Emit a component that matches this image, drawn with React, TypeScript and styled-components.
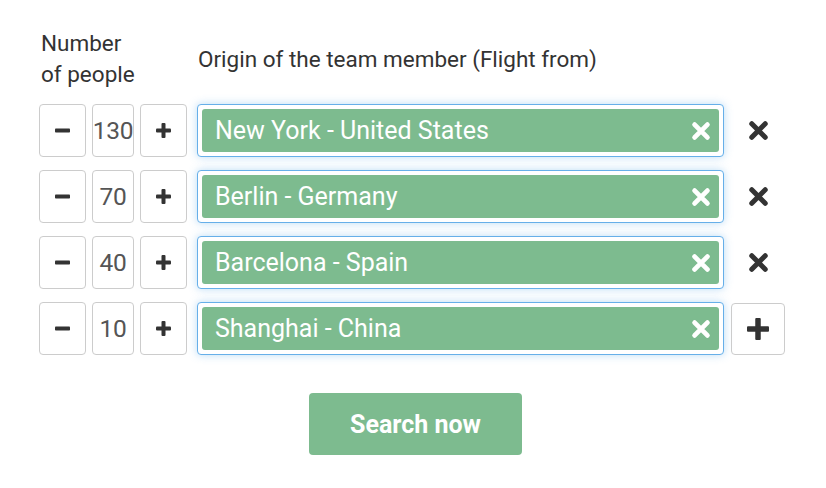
import React from "react";
import styled, { createGlobalStyle } from "styled-components";

const Global = createGlobalStyle`
  html, body { margin: 0; padding: 0; background: #fff; }
  body { font-family: Roboto, "Liberation Sans", sans-serif; }
`;

const GREEN = "#7dbb8f";

const Page = styled.div`
  padding: 28px 0 0 39px;
  width: 760px;
`;

const Grid = styled.div`
  display: grid;
  grid-template-columns: 148px 527px 54px;
  column-gap: 10px;
  row-gap: 13px;
  align-items: center;
`;

const HeadLabel = styled.div<{ $pad?: number }>`
  font-size: 22.5px;
  line-height: 31px;
  color: #333;
  padding-left: ${(p) => p.$pad ?? 0}px;
`;

const HeadRow = styled.div`
  grid-column: 1 / -1;
  display: grid;
  grid-template-columns: 148px 1fr;
  column-gap: 10px;
  align-items: center;
  margin-bottom: 1px;
`;

const Counter = styled.div`
  display: flex;
  gap: 6px;
  height: 53px;
`;

const StepButton = styled.button`
  width: 47px;
  height: 53px;
  box-sizing: border-box;
  border: 1px solid #ccc;
  border-radius: 4px;
  background: #fff;
  display: flex;
  align-items: center;
  justify-content: center;
  padding: 0;
  color: #333;
`;

const NumberBox = styled.div`
  width: 42px;
  height: 53px;
  box-sizing: border-box;
  border: 1px solid #ccc;
  border-radius: 4px;
  display: flex;
  align-items: center;
  justify-content: center;
  font-size: 24.5px;
  color: #555;
  overflow: hidden;
  letter-spacing: -0.3px;
`;

const Select = styled.div`
  height: 53px;
  box-sizing: border-box;
  border: 1px solid #66afe9;
  border-radius: 4px;
  box-shadow: 0 0 8px rgba(102, 175, 233, 0.45);
  padding: 4px;
  display: flex;
  background: #fff;
`;

const Tag = styled.div`
  flex: 1;
  background: ${GREEN};
  border-radius: 3px;
  display: flex;
  align-items: center;
  justify-content: space-between;
  padding: 0 8px 0 13px;
  color: #fff;
  font-size: 25px;
`;

const Action = styled.div<{ $boxed?: boolean }>`
  margin-left: -3px;
  width: 54px;
  height: 52px;
  box-sizing: border-box;
  border: ${(p) => (p.$boxed ? "1px solid #ccc" : "1px solid transparent")};
  border-radius: 4px;
  display: flex;
  align-items: center;
  justify-content: center;
`;

const Footer = styled.div`
  display: flex;
  justify-content: center;
  padding: 38px 0 0 0;
  width: 753px;
`;

const SearchButton = styled.button`
  width: 213px;
  height: 62px;
  border: none;
  border-radius: 4px;
  background: ${GREEN};
  color: #fff;
  font-family: Roboto, "Liberation Sans", sans-serif;
  font-weight: 700;
  font-size: 25px;
`;

const Cross = ({ color, size }: { color: string; size: number }) => (
  <svg width={size} height={size} viewBox="0 0 20 20">
    <path d="M3.6 3.6 L16.4 16.4 M16.4 3.6 L3.6 16.4" stroke={color} strokeWidth={4.8} strokeLinecap="round" />
  </svg>
);

const Minus = () => (
  <svg width="15" height="15" viewBox="0 0 15 15">
    <rect x="0" y="5.5" width="15" height="4" rx="0.8" fill="#333" />
  </svg>
);

const Plus = ({ size, t }: { size: number; t: number }) => (
  <svg width={size} height={size} viewBox={`0 0 ${size} ${size}`}>
    <rect x="0" y={(size - t) / 2} width={size} height={t} rx="1" fill="#333" />
    <rect x={(size - t) / 2} y="0" width={t} height={size} rx="1" fill="#333" />
  </svg>
);

const rows = [
  { n: 130, city: "New York - United States" },
  { n: 70, city: "Berlin - Germany" },
  { n: 40, city: "Barcelona - Spain" },
  { n: 10, city: "Shanghai - China" },
];

export default function App() {
  return (
    <Page>
      <Global />
      <Grid>
        <HeadRow>
          <HeadLabel $pad={2}>
            Number
            <br />
            of people
          </HeadLabel>
          <HeadLabel $pad={1}>Origin of the team member (Flight from)</HeadLabel>
        </HeadRow>
        {rows.map((r, i) => (
          <React.Fragment key={r.city}>
            <Counter>
              <StepButton>
                <Minus />
              </StepButton>
              <NumberBox>{r.n}</NumberBox>
              <StepButton>
                <Plus size={15} t={4} />
              </StepButton>
            </Counter>
            <Select>
              <Tag>
                <span>{r.city}</span>
                <Cross color="#fff" size={20} />
              </Tag>
            </Select>
            <Action $boxed={i === rows.length - 1}>
              {i === rows.length - 1 ? <Plus size={22} t={5.5} /> : <Cross color="#333" size={21} />}
            </Action>
          </React.Fragment>
        ))}
      </Grid>
      <Footer>
        <SearchButton>Search now</SearchButton>
      </Footer>
    </Page>
  );
}
